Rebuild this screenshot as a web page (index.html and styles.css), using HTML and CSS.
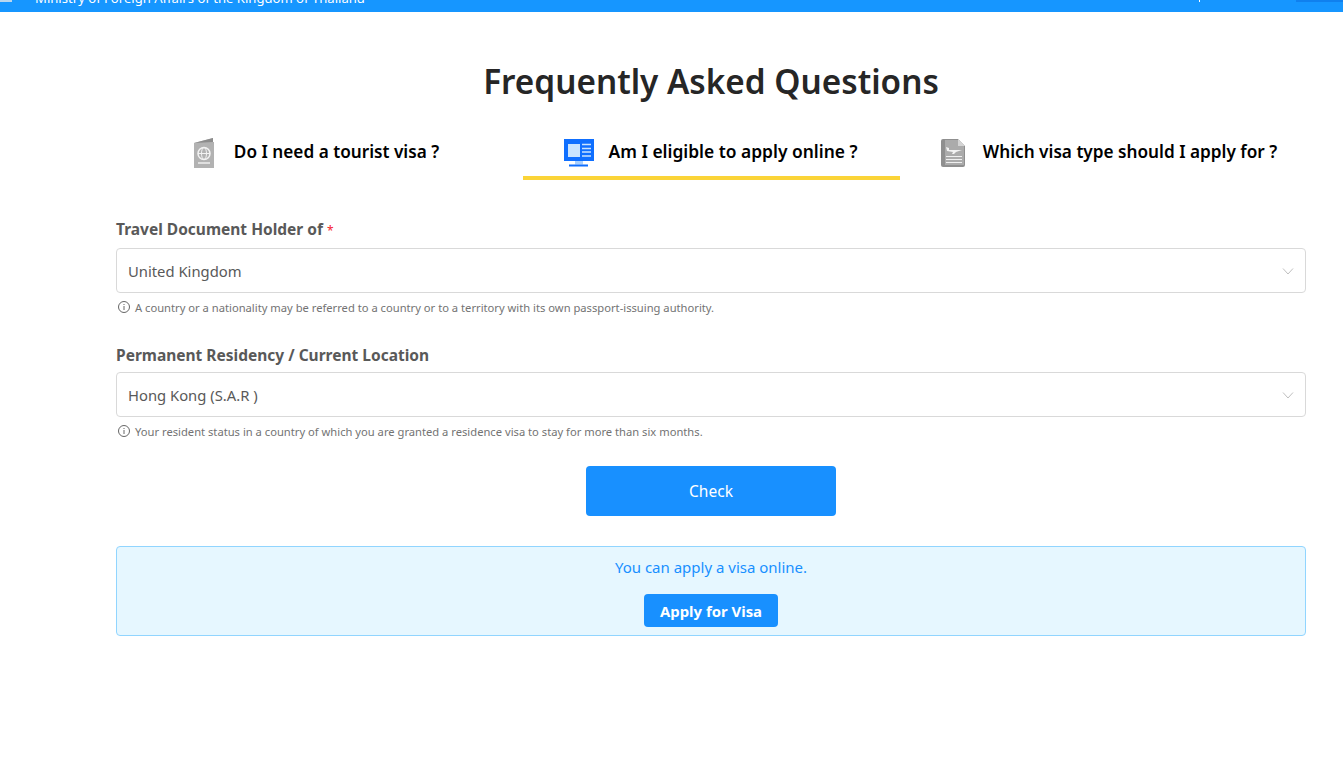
FILE: index.html
```html
<!DOCTYPE html>
<html lang="en">
<head>
    <meta charset="UTF-8">
    <meta name="viewport" content="width=device-width, initial-scale=1.0">
    <title>Frequently Asked Questions</title>
    <link rel="stylesheet" href="styles.css">
</head>
<body>
    <header class="topo">
        <div class="topo-logo"></div>
        <div class="topo-texto">Ministry of Foreign Affairs of the Kingdom of Thailand</div>
        <div class="topo-sep"></div>
        <div class="topo-menu"></div>
    </header>

    <main class="conteudo">
        <h1>Frequently Asked Questions</h1>

        <div class="abas">
            <div class="aba aba-1">
                <svg width="21" height="30" viewBox="0 0 21 30">
                    <path d="M0 5 L19 0 V4 H20 V30 H0 Z" fill="#b2b2b2"/>
                    <path d="M0 5 L19 0 V4 Z" fill="#8c8c8c"/>
                    <circle cx="10" cy="15.500" r="6" fill="none" stroke="#f2f2f2" stroke-width="1.500"/>
                    <ellipse cx="10" cy="15.500" rx="2.500" ry="6" fill="none" stroke="#f2f2f2" stroke-width="1"/>
                    <path d="M4 15.500 H16" stroke="#f2f2f2" stroke-width="1"/>
                    <path d="M4 25 H16" stroke="#f2f2f2" stroke-width="1.400"/>
                </svg>
                <span>Do I need a tourist visa ?</span>
            </div>
            <div class="aba aba-2 ativa">
                <svg width="30" height="28" viewBox="0 0 30 28">
                    <rect x="0" y="0" width="30" height="22" fill="#0f6fff"/>
                    <rect x="4" y="5" width="12" height="13" fill="#c9e4ff"/>
                    <path d="M18 5.500 H27 M18 9.500 H27 M18 13 H27 M18 17 H27" stroke="#c9e4ff" stroke-width="1.400"/>
                    <rect x="11" y="22" width="8" height="3.500" fill="#a8d0ff"/>
                    <rect x="5" y="25.500" width="19" height="2" fill="#0f6fff"/>
                </svg>
                <span>Am I eligible to apply online ?</span>
            </div>
            <div class="aba aba-3">
                <svg width="24" height="28" viewBox="0 0 24 28">
                    <path d="M2 0 H17 L24 7 V26 Q24 28 22 28 H2 Q0 28 0 26 V2 Q0 0 2 0 Z" fill="#8f8f8f"/>
                    <path d="M4 1 H17 L23 7 V26 H4 Z" fill="#ababab"/>
                    <path d="M17 0 L24 7 H17 Z" fill="#d4d4d4"/>
                    <path d="M5 8 L8 9 L8 11 H21 L15 13 L13 15 H11 L12 13 L6 12 Z" fill="#f2f2f2"/>
                    <path d="M5 17.500 H21 M5 20.500 H21 M5 23.500 H21" stroke="#efefef" stroke-width="1.200"/>
                </svg>
                <span>Which visa type should I apply for ?</span>
            </div>
        </div>

        <form class="form">
            <div class="campo">
                <label>Travel Document Holder of <em>*</em></label>
                <div class="select">
                    <span>United Kingdom</span>
                    <svg class="seta" width="12" height="12" viewBox="0 0 12 12"><path d="M1 3.500 L6 9 L11 3.500" fill="none" stroke="#bfbfbf" stroke-width="1"/></svg>
                </div>
                <p class="dica">
                    <svg width="14" height="14" viewBox="0 0 14 14"><circle cx="7" cy="7" r="5.500" fill="none" stroke="#666" stroke-width="1"/><path d="M7 6 V10 M7 4 V5" stroke="#666" stroke-width="1"/></svg>
                    A country or a nationality may be referred to a country or to a territory with its own passport-issuing authority.
                </p>
            </div>
            <div class="campo">
                <label>Permanent Residency / Current Location</label>
                <div class="select">
                    <span>Hong Kong (S.A.R )</span>
                    <svg class="seta" width="12" height="12" viewBox="0 0 12 12"><path d="M1 3.500 L6 9 L11 3.500" fill="none" stroke="#bfbfbf" stroke-width="1"/></svg>
                </div>
                <p class="dica">
                    <svg width="14" height="14" viewBox="0 0 14 14"><circle cx="7" cy="7" r="5.500" fill="none" stroke="#666" stroke-width="1"/><path d="M7 6 V10 M7 4 V5" stroke="#666" stroke-width="1"/></svg>
                    Your resident status in a country of which you are granted a residence visa to stay for more than six months.
                </p>
            </div>
            <div class="acao">
                <button type="button" class="btn-check">Check</button>
            </div>
        </form>

        <div class="resultado">
            <p>You can apply a visa online.</p>
            <button type="button" class="btn-apply">Apply for Visa</button>
        </div>
    </main>
</body>
</html>
```

FILE: styles.css
```css
html, body { margin: 0; padding: 0; background: #fff; }
body { font-family: "Noto Sans", "Open Sans", sans-serif; color: #262626; height: 766px; overflow: hidden; }

.topo { display: flex; align-items: flex-end; height: 12px; background: #1696ff; overflow: hidden; position: relative; }
.topo-logo { width: 12px; height: 2px; margin-bottom: 10px; background: #b9d6ee; flex: none; }
.topo-texto { margin-left: 23px; margin-bottom: 4px; color: #fff; font-size: 13.100px; line-height: 20px; white-space: nowrap; }
.topo-sep { position: absolute; left: 1199px; top: 0; width: 1px; height: 2px; background: #fff; }
.topo-menu { position: absolute; left: 1296px; top: 0; width: 47px; height: 2px; background: #1080ee; }

.conteudo { padding: 0 37px 0 116px; }

h1 { margin: 0; padding-top: 46px; text-align: center; font-size: 33.300px; line-height: 46px; font-weight: 600; color: #262626; }

.abas { display: flex; margin-top: 10px; height: 66px; color: #000; font-size: 17.200px; font-weight: 600; }
.aba { display: flex; align-items: center; justify-content: center; height: 50px; padding-top: 12px; white-space: nowrap; }
.aba svg { flex: none; margin-top: 4px; }
.aba-1 { width: 401px; padding-right: 6px; gap: 19px; }
.aba-2 { width: 375px; padding-right: 2px; gap: 15px; font-size: 17.400px; }
.aba-3 { width: 394px; padding-left: 12px; gap: 18px; }
.ativa { border-bottom: 4px solid #fbd437; }

.form { margin-top: 37px; }
.campo + .campo { margin-top: 25px; }
label { display: block; font-size: 15.500px; line-height: 24px; font-weight: 700; color: #595959; margin-bottom: 5px; }
label em { color: #f5222d; font-style: normal; font-weight: 400; font-size: 12px; }
.select { display: flex; align-items: center; justify-content: space-between; height: 43px; padding: 0 11px; border: 1px solid #d9d9d9; border-radius: 4px; font-size: 14.800px; color: #595959; }
.dica { display: flex; align-items: center; gap: 4px; margin: 5px 0 0; padding-left: 1px; font-size: 11.200px; line-height: 20px; color: #737373; }
.dica svg { flex: none; margin-top: -3px; }

.acao { display: flex; justify-content: center; margin-top: 24px; }
.btn-check { width: 250px; height: 50px; border: 0; border-radius: 4px; background: #1890ff; color: #fff; font-family: inherit; font-size: 15.500px; }

.resultado { display: flex; flex-direction: column; align-items: center; height: 88px; margin-top: 30px; border: 1px solid #91d5ff; border-radius: 4px; background: #e6f7ff; }
.resultado p { margin: 9px 0 0; font-size: 15px; line-height: 22px; color: #1890ff; }
.btn-apply { height: 33px; margin-top: 16px; padding: 0 15.500px; border: 0; border-radius: 4px; background: #1890ff; color: #fff; font-family: inherit; font-size: 14.900px; font-weight: 700; }
```
